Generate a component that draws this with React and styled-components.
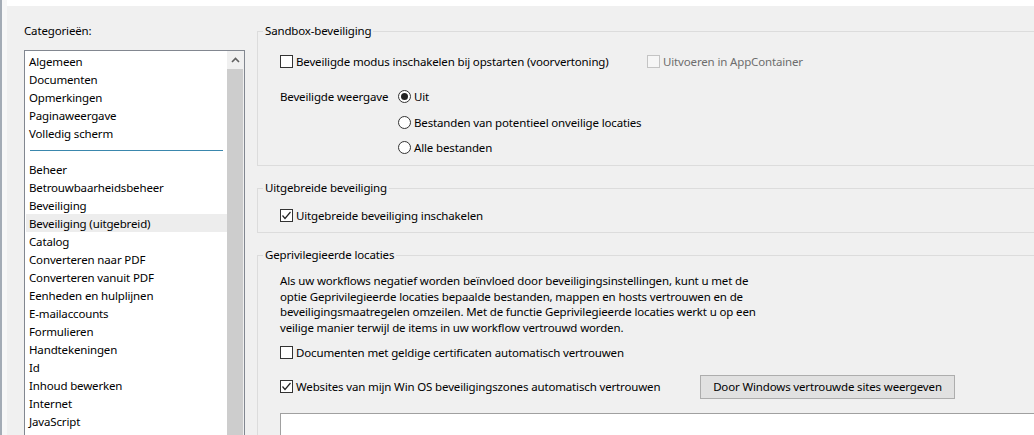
import React from 'react';
import styled, { createGlobalStyle } from 'styled-components';

const GlobalStyle = createGlobalStyle`
  html, body {
    margin: 0;
    padding: 0;
    background: #fff;
    overflow: hidden;
  }
  body {
    font-family: "Noto Sans", "Segoe UI", sans-serif;
    font-size: 11.5px;
    letter-spacing: -0.15px;
    color: #000;
  }
`;

const categories = [
  'Algemeen', 'Documenten', 'Opmerkingen', 'Paginaweergave', 'Volledig scherm',
  '---',
  'Beheer', 'Betrouwbaarheidsbeheer', 'Beveiliging', 'Beveiliging (uitgebreid)',
  'Catalog', 'Converteren naar PDF', 'Converteren vanuit PDF', 'Eenheden en hulplijnen',
  'E-mailaccounts', 'Formulieren', 'Handtekeningen', 'Id', 'Inhoud bewerken',
  'Internet', 'JavaScript', 'Klembord',
];

function CheckBox({ checked, disabled, children }) {
  return (
    <CheckRow>
      <Box $disabled={disabled}>
        {checked && (
          <svg width="11" height="11" viewBox="0 0 11 11">
            <polyline points="1.5,5.5 4,8.5 9.5,2" fill="none" stroke="#222" strokeWidth="1.2" />
          </svg>
        )}
      </Box>
      <Caption $disabled={disabled}>{children}</Caption>
    </CheckRow>
  );
}

function Radio({ checked, children }) {
  return (
    <CheckRow>
      <Circle>{checked && <Dot />}</Circle>
      <Caption>{children}</Caption>
    </CheckRow>
  );
}

export default function App() {
  return (
    <>
      <GlobalStyle />
      <Screen>
        <EdgeStrip />
        <Dialog>
          <Sidebar>
            <SideLabel>Categorieën:</SideLabel>
            <ListBox>
              <Items>
                {categories.map((c, i) =>
                  c === '---'
                    ? <Separator key={i} />
                    : <Item key={i} $active={c === 'Beveiliging (uitgebreid)'}>{c}</Item>
                )}
              </Items>
              <ScrollBar>
                <ScrollUp>
                  <svg width="9" height="6" viewBox="0 0 9 6">
                    <polyline points="1,5 4.5,1.5 8,5" fill="none" stroke="#606060" strokeWidth="1.6" />
                  </svg>
                </ScrollUp>
                <Thumb />
              </ScrollBar>
            </ListBox>
          </Sidebar>

          <Content>
            <Group $gap={14}>
              <Legend>Sandbox-beveiliging</Legend>
              <GroupBody $pt={14} $pb={10}>
                <SplitRow $first={367}>
                  <CheckBox>Beveiligde modus inschakelen bij opstarten (voorvertoning)</CheckBox>
                  <CheckBox disabled>Uitvoeren in AppContainer</CheckBox>
                </SplitRow>
                <RadioGrid>
                  <Caption>Beveiligde weergave</Caption>
                  <Radio checked>Uit</Radio>
                  <span />
                  <Radio>Bestanden van potentieel onveilige locaties</Radio>
                  <span />
                  <Radio>Alle bestanden</Radio>
                </RadioGrid>
              </GroupBody>
            </Group>

            <Group $gap={14}>
              <Legend>Uitgebreide beveiliging</Legend>
              <GroupBody $pt={11} $pb={9}>
                <CheckBox checked>Uitgebreide beveiliging inschakelen</CheckBox>
              </GroupBody>
            </Group>

            <Group $gap={0}>
              <Legend>Geprivilegieerde locaties</Legend>
              <GroupBody $pt={10} $pb={0}>
                <Paragraph>
                  Als uw workflows negatief worden beïnvloed door beveiligingsinstellingen, kunt u met de<br />
                  optie Geprivilegieerde locaties bepaalde bestanden, mappen en hosts vertrouwen en de<br />
                  beveiligingsmaatregelen omzeilen. Met de functie Geprivilegieerde locaties werkt u op een<br />
                  veilige manier terwijl de items in uw workflow vertrouwd worden.
                </Paragraph>
                <Spaced $mt={9}>
                  <CheckBox>Documenten met geldige certificaten automatisch vertrouwen</CheckBox>
                </Spaced>
                <SplitRow $first={420} $mt={14} $h={24}>
                  <CheckBox checked>Websites van mijn Win OS beveiligingszones automatisch vertrouwen</CheckBox>
                  <Button>Door Windows vertrouwde sites weergeven</Button>
                </SplitRow>
                <WhiteList />
              </GroupBody>
            </Group>
          </Content>
        </Dialog>
      </Screen>
    </>
  );
}

const Screen = styled.div`
  display: flex;
  height: 435px;
  overflow: hidden;
`;

const EdgeStrip = styled.div`
  width: 7px;
  flex-shrink: 0;
  background: linear-gradient(to right, #a3abb5 0, #a3abb5 2px, #f7f7f7 2px);
`;

const Dialog = styled.div`
  flex: 1;
  display: flex;
  margin-top: 6px;
  background: #f0f0f0;
  overflow: hidden;
`;

const Sidebar = styled.div`
  width: 250px;
  flex-shrink: 0;
  padding: 17px 0 0 17px;
  box-sizing: border-box;
  display: flex;
  flex-direction: column;
`;

const SideLabel = styled.div`
  line-height: 16px;
  margin-bottom: 11px;
`;

const ListBox = styled.div`
  width: 221px;
  height: 420px;
  flex-shrink: 0;
  box-sizing: border-box;
  border: 1px solid #828790;
  background: #fff;
  display: flex;
`;

const Items = styled.div`
  flex: 1;
  padding-top: 1px;
  overflow: hidden;
`;

const Item = styled.div`
  height: 18px;
  line-height: 19px;
  margin-left: 1px;
  padding-left: 3px;
  white-space: nowrap;
  background: ${p => (p.$active ? '#ededed' : 'transparent')};
`;

const Separator = styled.div`
  height: 18px;
  margin: 0 4px 0 5px;
  background: linear-gradient(#3a87ad, #3a87ad) no-repeat 0 8px / 100% 1px;
`;

const ScrollBar = styled.div`
  width: 17px;
  display: flex;
  flex-direction: column;
  background: #f0f0f0;
`;

const ScrollUp = styled.div`
  height: 18px;
  display: flex;
  align-items: center;
  justify-content: center;
`;

const Thumb = styled.div`
  flex: 1;
  margin-right: 1px;
  background: #cdcdcd;
`;

const Content = styled.div`
  flex: 1;
  min-width: 0;
  padding-top: 17px;
`;

const Group = styled.fieldset`
  width: 820px;
  margin: 0 0 ${p => p.$gap}px 0;
  padding: 0;
  border: 1px solid #dcdcdc;
  box-sizing: border-box;
`;

const Legend = styled.legend`
  margin-left: 5px;
  padding: 0 2px;
  line-height: 16px;
`;

const GroupBody = styled.div`
  padding: ${p => p.$pt}px 0 ${p => p.$pb}px 22px;
`;

const SplitRow = styled.div`
  display: grid;
  grid-template-columns: ${p => p.$first}px auto;
  justify-content: start;
  align-items: center;
  height: ${p => p.$h || 16}px;
  margin-top: ${p => p.$mt || 0}px;
`;

const Spaced = styled.div`
  margin-top: ${p => p.$mt}px;
`;

const RadioGrid = styled.div`
  display: grid;
  grid-template-columns: 118px auto;
  justify-content: start;
  row-gap: 9px;
  margin-top: 19px;
`;

const CheckRow = styled.label`
  display: flex;
  align-items: center;
  height: 16px;
  white-space: nowrap;
`;

const Box = styled.span`
  width: 13px;
  height: 13px;
  box-sizing: border-box;
  flex-shrink: 0;
  display: inline-flex;
  align-items: center;
  justify-content: center;
  margin-right: 3px;
  border: 1px solid ${p => (p.$disabled ? '#c4c4c4' : '#333')};
  background: ${p => (p.$disabled ? '#f6f6f6' : '#fff')};
`;

const Circle = styled.span`
  width: 13px;
  height: 13px;
  box-sizing: border-box;
  flex-shrink: 0;
  border-radius: 50%;
  border: 1px solid #333;
  background: #fff;
  display: inline-flex;
  align-items: center;
  justify-content: center;
  margin-right: 3px;
`;

const Dot = styled.span`
  width: 7px;
  height: 7px;
  border-radius: 50%;
  background: #222;
`;

const Caption = styled.span`
  line-height: 17px;
  white-space: nowrap;
  color: ${p => (p.$disabled ? '#6d6d6d' : '#000')};
`;

const Paragraph = styled.p`
  margin: 0;
  line-height: 15.7px;
  white-space: nowrap;
`;

const Button = styled.button`
  width: 255px;
  height: 24px;
  padding: 0;
  font: inherit;
  letter-spacing: inherit;
  color: #000;
  background: #e1e1e1;
  border: 1px solid #adadad;
`;

const WhiteList = styled.div`
  height: 60px;
  margin-top: 14px;
  background: #fff;
  border: 1px solid #a0a0a0;
  border-right: none;
`;
